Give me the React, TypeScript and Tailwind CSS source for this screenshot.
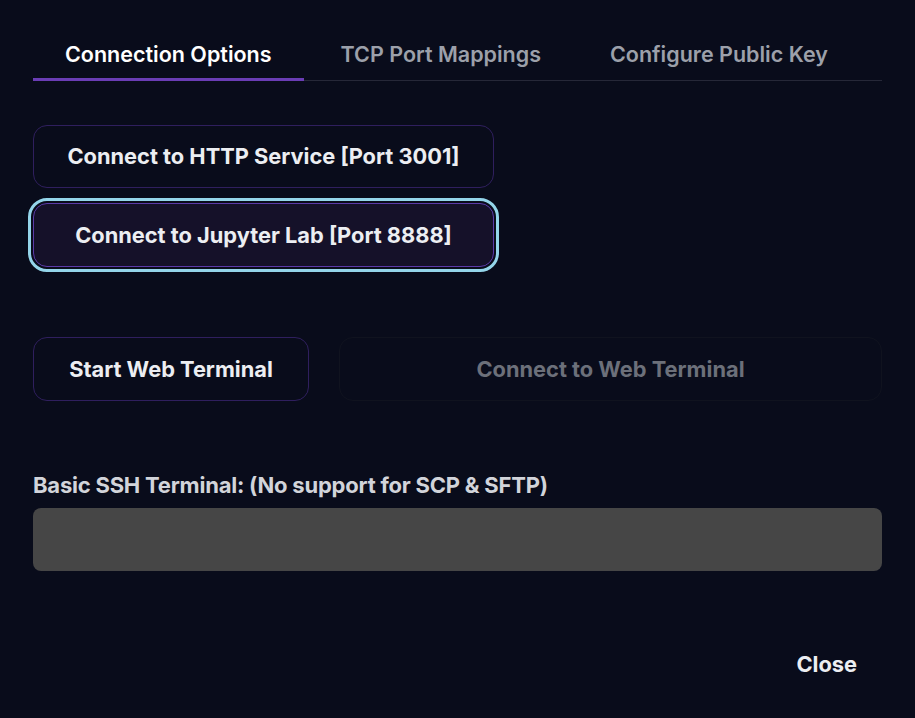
import { useState } from 'react';

const tabs = ['Connection Options', 'TCP Port Mappings', 'Configure Public Key'];

const App = () => {
  const [active, setActive] = useState(0);

  return (
    <div
      className="min-h-[718px] w-full bg-[#090c1b] px-[33px] pt-[42px] text-white"
      style={{ fontFamily: 'Inter, "Noto Sans", sans-serif' }}
    >
      <div className="flex gap-[5px] border-b border-[#262838]">
        {tabs.map((tab, index) => (
          <button
            key={tab}
            onClick={() => setActive(index)}
            className={`-mb-px border-b-[3px] px-8 pb-[12px] text-[21.5px] font-semibold leading-6 ${
              index === active ? 'border-[#6a3db5] text-white' : 'border-transparent text-[#9ca0aa]'
            }`}
          >
            {tab}
          </button>
        ))}
      </div>

      <div className="mt-[44px] flex flex-col items-start gap-[15px]">
        <button className="h-[63px] w-[461px] rounded-[14px] border border-[#2f1f5e] text-[21.8px] font-bold text-[#eceef2]">
          Connect to HTTP Service [Port 3001]
        </button>
        <button className="h-[64px] w-[461px] rounded-[14px] border border-[#5b3aa8] bg-[#151129] text-[21.8px] font-bold text-[#eceef2] outline-[3px] outline-offset-[2px] outline-[#94d5ea] outline-solid">
          Connect to Jupyter Lab [Port 8888]
        </button>
      </div>

      <div className="mt-[70px] flex gap-[30px]">
        <button className="h-[64px] w-[276px] rounded-[14px] border border-[#2f1f5e] text-[21.8px] font-bold text-[#eceef2]">
          Start Web Terminal
        </button>
        <button
          disabled
          className="h-[64px] flex-1 rounded-[14px] border border-[#10131f] text-[21.8px] font-bold text-[#6c707a]"
        >
          Connect to Web Terminal
        </button>
      </div>

      <div className="mt-[70px]">
        <div className="text-[22px] font-bold leading-7 tracking-[-0.01em] text-[#d2d4da]">
          Basic SSH Terminal: (No support for SCP &amp; SFTP)
        </div>
        <div className="mt-[9px] h-[63px] w-full rounded-lg bg-[#464646]" />
      </div>

      <div className="mt-[81px] flex justify-end pr-[25px]">
        <button className="text-[21.8px] font-bold leading-6 text-[#eceef2]">Close</button>
      </div>
    </div>
  );
};

export default App;
